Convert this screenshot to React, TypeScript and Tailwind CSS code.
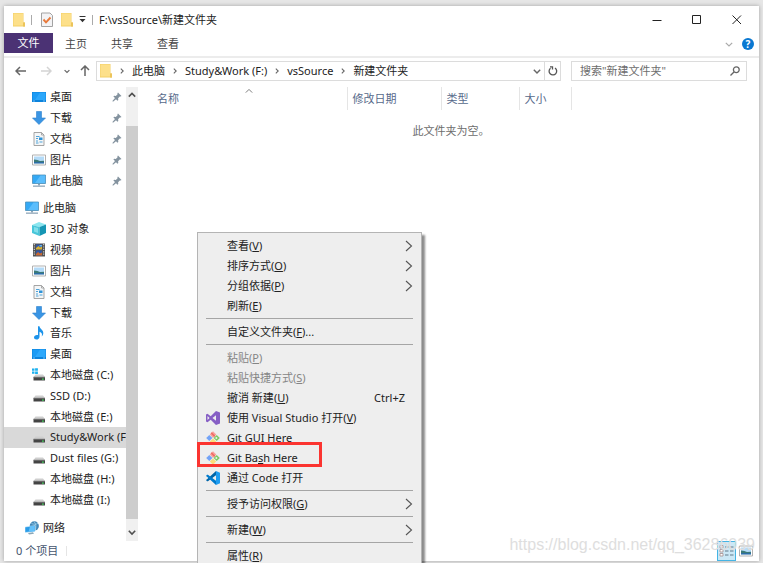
import type { ReactNode } from "react";

/* ---------- icons ---------- */

function FolderIcon() {
  return (
    <svg viewBox="0 0 12 15" className="h-[15px] w-3 shrink-0" aria-hidden="true">
      <path d="M0 1h10.500v9.500H12v4H0z" fill="#f3cf66" />
      <path d="M.5 1.500h9.500v12H.5z" fill="#fde08a" />
      <path d="M10 10.500h2v4h-2z" fill="#ecc45a" />
    </svg>
  );
}

function CheckPageIcon() {
  return (
    <svg viewBox="0 0 12 15" className="h-[15px] w-3 shrink-0" aria-hidden="true">
      <path d="M.5 1h8.500l2.500 2.500v11H.5z" fill="#f3f3f5" stroke="#a3a3a3" />
      <path d="M2.500 7.500 5 10.300l4.500-4.800" fill="none" stroke="#e8793a" strokeWidth="1.900" />
    </svg>
  );
}

function DesktopIcon() {
  return (
    <svg viewBox="0 0 14 12" className="h-3 w-[14px]" aria-hidden="true">
      <path d="M0 1h14v10H0z" fill="#0c83dc" />
      <path d="M.5 1.500h13v7.500H.5z" fill="#1b9bf5" />
      <path d="M8 1.500h5.500v7.500H3z" fill="#3bb0ff" opacity=".6" />
      <path d="M1 10h2M11 10h2" stroke="#8fd0ff" strokeWidth=".8" />
    </svg>
  );
}

function DownloadIcon() {
  return (
    <svg viewBox="0 0 14 14" className="h-[14px] w-[14px]" aria-hidden="true">
      <path d="M4.500.5h5V7h4L7 13.500.5 7h4z" fill="#3a95e4" stroke="#2c80cc" strokeWidth=".6" />
    </svg>
  );
}

function DocumentIcon() {
  return (
    <svg viewBox="0 0 14 14" className="h-[14px] w-[14px]" aria-hidden="true">
      <path d="M2 .5h7.500L12 3v10.500H2z" fill="#f4f6f7" stroke="#9b9b9b" strokeWidth=".9" />
      <path d="M9.500.5V3H12" fill="none" stroke="#9b9b9b" strokeWidth=".8" />
      <path d="M4 4.500h3.500M4 6.500h2M4 9h2M7.500 10h3M4 11h2.500" stroke="#4fa3d9" strokeWidth="1" />
      <path d="M7 5.500h3.500v2.500H7z" fill="#2d93d8" />
    </svg>
  );
}

function PictureIcon() {
  return (
    <svg viewBox="0 0 14 12" className="h-3 w-[14px]" aria-hidden="true">
      <path d="M.5 1h13v10H.5z" fill="#fff" stroke="#a8a8a8" strokeWidth=".9" />
      <path d="M2 2.500h10v7H2z" fill="#b4dbf8" />
      <path d="M2 5.500c3 0 4 1 6 1.500l4-.3v1.500H2z" fill="#3b7a78" />
      <path d="M2 8h10v1.500H2z" fill="#2e6da5" />
    </svg>
  );
}

function ComputerIcon() {
  return (
    <svg viewBox="0 0 14 14" className="h-[14px] w-[14px]" aria-hidden="true">
      <path d="M.5 1h13v8.500H.5z" fill="#34a9f5" stroke="#4c8fb8" strokeWidth=".8" />
      <path d="M8.500 1.400h4.600v7.700H3z" fill="#6bc6ff" opacity=".7" />
      <path d="M6 10h2v1.500H6z" fill="#8ba3b5" />
      <path d="M1 11.500h12v1.300H1z" fill="#8fa6b8" />
    </svg>
  );
}

function CubeIcon() {
  return (
    <svg viewBox="0 0 14 14" className="h-[14px] w-[14px]" aria-hidden="true">
      <path d="m0 3 7-3 7 2.500L7.500 5z" fill="#8be6ef" />
      <path d="m0 3 7.500 2v9L0 11z" fill="#48c6d9" />
      <path d="M7.500 5 14 2.500v8.500l-6.500 3z" fill="#1596b4" />
      <path d="m2 5 4 1v5l-4-1.500z" fill="#a6eff5" opacity=".6" />
    </svg>
  );
}

function VideoIcon() {
  return (
    <svg viewBox="0 0 14 14" className="h-[14px] w-[14px]" aria-hidden="true">
      <path d="M1 .5h12v13H1z" fill="#525252" />
      <path d="M2.300 1v12M11.700 1v12" stroke="#d7d7d7" strokeWidth="1.100" strokeDasharray="1.200 1.200" />
      <path d="M4 1.500h6v5H4zM4 7.500h6v5H4z" fill="#3157a5" />
      <path d="m4 5 2.500-2L8 4.500l2-1v3H4z" fill="#d8b130" />
      <path d="m4 11 2-2 2 1.500 2-1v3H4z" fill="#c9682e" />
      <path d="M7.500 2H10v1.500H7.500z" fill="#62b4ec" />
    </svg>
  );
}

function MusicIcon() {
  return (
    <svg viewBox="0 0 14 14" className="h-[14px] w-[14px]" aria-hidden="true">
      <path d="M6 .3h1.500C7.800 3 11.500 4 11.300 7c0 1.500-.6 2.600-1.600 3.500.8-2.500.1-4-2.200-4.800v5c0 1.800-1.500 2.900-3 2.900-1.400 0-2.500-.8-2.500-2 0-1.500 1.500-2.600 3.200-2.500H6z" fill="#1c93ea" />
    </svg>
  );
}

function DriveIcon({ system = false }: { system?: boolean }) {
  return (
    <svg viewBox="0 0 14 14" className="h-[14px] w-[14px]" aria-hidden="true">
      {system && <path d="M0 .5h2.500v2.300H0zM3.100.3h2.800v2.500H3.100zM0 3.400h2.500v2.300H0zM3.100 3.400h2.800v2.500H3.100z" fill="#1bb0ee" />}
      <path d="M3.500 6.500h7.500l2 2.500H1.500z" fill="#cfcfcf" />
      <path d="M1.500 9h11.500v3.500H1.500z" fill="#444" />
      <path d="M1.500 8.700h11.500v.8H1.500z" fill="#8d8d8d" />
      <path d="M10 10.500h1.800v1.200H10z" fill="#43d15c" />
    </svg>
  );
}

function NetworkIcon() {
  return (
    <svg viewBox="0 0 14 14" className="h-[14px] w-[14px]" aria-hidden="true">
      <circle cx="9.300" cy="4.900" r="4.600" fill="#4287b8" />
      <path d="M6.500 2.500c2 1 5 1 6.500-.2M9 .5c2 2 2.500 6 1 9" fill="none" stroke="#a5d3ea" strokeWidth=".8" />
      <path d="m0 6 10-1.500v6L0 11.500z" fill="#2a9ce8" stroke="#e7f4fb" strokeWidth=".5" />
      <path d="m5 5.300 4.600-.6v5.500l-6 .6z" fill="#63c0fa" />
      <path d="M3 12 8 11.300l1 1.500-5 .7z" fill="#8ba7b8" />
    </svg>
  );
}

function PinIcon() {
  return (
    <svg viewBox="0 0 10 10" className="h-[10px] w-[10px]" aria-hidden="true">
      <path d="M6 .5 9.500 4l-1 .5-.7-.1-1.700 1.900.2 1.700-.9.700L4 7.200 1 9.700.4 9.100 3 6 1.400 4.600l.7-.9 1.700.2 1.800-1.700L5.400 1.200z" fill="#84939f" />
    </svg>
  );
}

function VisualStudioIcon() {
  return (
    <svg viewBox="0 0 14 14" className="h-[14px] w-[14px]" aria-hidden="true">
      <path fillRule="evenodd" d="m10 0 4 1.600v10.800L10 14 4.700 8.800 1.500 11.300 0 10.500v-7l1.500-.8 3.200 2.500zM10 4.200 6.500 7 10 9.800zM1.500 5v4l2-2z" fill="#865fc5" />
    </svg>
  );
}

function CodeIcon() {
  return (
    <svg viewBox="0 0 14 14" className="h-[14px] w-[14px]" aria-hidden="true">
      <path d="M10 0 1 8.300l-1 .8 1 1.200.9-.1L10 4.200z" fill="#0065a9" />
      <path d="M10 14 1 5.700 0 4.900l1-1.200.9.1L10 9.800z" fill="#007acc" />
      <path d="m10 0 4 1.700v10.600L10 14z" fill="#1f9cf0" />
    </svg>
  );
}

function GitIcon() {
  return (
    <svg viewBox="0 0 14 14" className="h-[14px] w-[14px]" aria-hidden="true">
      <path d="M7 .3 10.300 3.600 7 6.900 3.700 3.600z" fill="#f8a09a" />
      <path d="m5.200 1.800 3.600 3.600" stroke="#ee6a64" strokeWidth="1.500" />
      <path d="M3.300 3.900 6.400 7 3.300 10.100.2 7z" fill="#73a3f7" />
      <path d="M10.700 3.900 13.800 7l-3.100 3.100L7.600 7z" fill="#7ccb62" />
      <circle cx="10.400" cy="7" r="1" fill="#eee" />
      <path d="M7 7.400 10.200 10.600 7 13.800l-3.200-3.200z" fill="#fbdc7c" />
    </svg>
  );
}

function Chevron({ className, d = "m1 3.500 4 4 4-4", width = 1.2 }: { className: string; d?: string; width?: number }) {
  return (
    <svg viewBox="0 0 10 10" className={className} fill="none" stroke="currentColor" strokeWidth={width} aria-hidden="true">
      <path d={d} />
    </svg>
  );
}

const RIGHT = "m3 1 4 4-4 4";
const UP = "m1 7 4-4 4 4";

/* ---------- navigation pane ---------- */

type NavEntry = { label: string; icon: ReactNode; pinned?: boolean; root?: boolean; selected?: boolean };

const quickAccess: NavEntry[] = [
  { label: "桌面", icon: <DesktopIcon />, pinned: true },
  { label: "下载", icon: <DownloadIcon />, pinned: true },
  { label: "文档", icon: <DocumentIcon />, pinned: true },
  { label: "图片", icon: <PictureIcon />, pinned: true },
  { label: "此电脑", icon: <ComputerIcon />, pinned: true },
];

const thisPc: NavEntry[] = [
  { label: "此电脑", icon: <ComputerIcon />, root: true },
  { label: "3D 对象", icon: <CubeIcon /> },
  { label: "视频", icon: <VideoIcon /> },
  { label: "图片", icon: <PictureIcon /> },
  { label: "文档", icon: <DocumentIcon /> },
  { label: "下载", icon: <DownloadIcon /> },
  { label: "音乐", icon: <MusicIcon /> },
  { label: "桌面", icon: <DesktopIcon /> },
  { label: "本地磁盘 (C:)", icon: <DriveIcon system /> },
  { label: "SSD (D:)", icon: <DriveIcon /> },
  { label: "本地磁盘 (E:)", icon: <DriveIcon /> },
  { label: "Study&Work (F:)", icon: <DriveIcon />, selected: true },
  { label: "Dust files (G:)", icon: <DriveIcon /> },
  { label: "本地磁盘 (H:)", icon: <DriveIcon /> },
  { label: "本地磁盘 (I:)", icon: <DriveIcon /> },
];

const network: NavEntry[] = [{ label: "网络", icon: <NetworkIcon />, root: true }];

function NavRow({ entry }: { entry: NavEntry }) {
  return (
    <li className="flex min-h-0 flex-1">
      <button
        className={`flex w-full items-center overflow-hidden text-left whitespace-nowrap ${entry.root ? "pl-[21px]" : "pl-7"} ${entry.selected ? "bg-[#d9d9d9]" : ""}`}
      >
        <span className="flex w-[14px] shrink-0 justify-center">{entry.icon}</span>
        <span className="ml-1 flex-1">{entry.label}</span>
        {entry.pinned && (
          <span className="mr-1">
            <PinIcon />
          </span>
        )}
      </button>
    </li>
  );
}

function NavigationPane() {
  return (
    <div className="flex w-[134px] shrink-0">
      <nav aria-label="导航窗格" className="flex w-[122px] flex-col gap-[7px] pb-[3px]">
        <ul className="flex flex-[5] flex-col">
          {quickAccess.map((e) => <NavRow key={e.label} entry={e} />)}
        </ul>
        <ul className="flex flex-[15] flex-col">
          {thisPc.map((e) => <NavRow key={e.label} entry={e} />)}
        </ul>
        <ul className="flex flex-1 flex-col">
          {network.map((e) => <NavRow key={e.label} entry={e} />)}
        </ul>
      </nav>
      <div className="flex w-3 flex-col items-center bg-[#f0f0f0] text-[#505050]">
        <button aria-label="向上滚动" className="flex h-[39px] pt-1">
          <Chevron className="h-2 w-2" d={UP} width={2} />
        </button>
        <div className="w-full flex-1 bg-[#cdcdcd]" />
        <button aria-label="向下滚动" className="flex h-[22px] items-center pt-1">
          <Chevron className="h-2 w-2" width={2} />
        </button>
      </div>
    </div>
  );
}

/* ---------- file list ---------- */

function FileList() {
  return (
    <main className="min-w-0 flex-1 pl-[5px]">
      <table className="w-full table-fixed border-collapse text-left">
        <thead className="text-[#56698a]">
          <tr className="h-[23px]">
            <th className="relative w-[204px] border-r border-[#e5e5e5] pl-[14px] font-normal">
              名称
              <Chevron className="absolute top-0 left-1/2 h-2 w-2 text-[#777]" d={UP} />
            </th>
            <th className="w-[94px] border-r border-[#e5e5e5] pl-[5px] font-normal">修改日期</th>
            <th className="w-[78px] border-r border-[#e5e5e5] pl-[5px] font-normal">类型</th>
            <th className="w-[52px] border-r border-[#e5e5e5] pl-[5px] font-normal">大小</th>
            <th aria-hidden="true" />
          </tr>
        </thead>
        <tbody>
          <tr>
            <td colSpan={5} className="h-[42px] text-center text-[#6d6d6d]">此文件夹为空。</td>
          </tr>
        </tbody>
      </table>
    </main>
  );
}

/* ---------- context menu ---------- */

type MenuEntry = { label: string; hotkey?: string; tail?: string; icon?: ReactNode; sub?: boolean; disabled?: boolean; shortcut?: string; marked?: boolean };

const menuGroups: MenuEntry[][] = [
  [
    { label: "查看", hotkey: "V", sub: true },
    { label: "排序方式", hotkey: "O", sub: true },
    { label: "分组依据", hotkey: "P", sub: true },
    { label: "刷新", hotkey: "E" },
  ],
  [{ label: "自定义文件夹", hotkey: "F", tail: "..." }],
  [
    { label: "粘贴", hotkey: "P", disabled: true },
    { label: "粘贴快捷方式", hotkey: "S", disabled: true },
    { label: "撤消 新建", hotkey: "U", shortcut: "Ctrl+Z" },
    { label: "使用 Visual Studio 打开", hotkey: "V", icon: <VisualStudioIcon /> },
    { label: "Git GUI Here", icon: <GitIcon /> },
    { label: "Git Bash Here", icon: <GitIcon />, marked: true },
    { label: "通过 Code 打开", icon: <CodeIcon /> },
  ],
  [{ label: "授予访问权限", hotkey: "G", sub: true }],
  [{ label: "新建", hotkey: "W", sub: true }],
  [{ label: "属性", hotkey: "R" }],
];

function MenuRow({ entry }: { entry: MenuEntry }) {
  return (
    <button
      role="menuitem"
      disabled={entry.disabled}
      className={`relative flex h-5 w-full items-center pr-2 pl-2 text-left ${entry.disabled ? "text-[#858585]" : "text-[#222]"}`}
    >
      <span className="w-[21px] shrink-0">{entry.icon}</span>
      <span className="flex-1">
        {entry.marked ? <>Git Ba<u>s</u>h Here</> : entry.label}
        {entry.hotkey && <>(<u>{entry.hotkey}</u>)</>}
        {entry.tail}
      </span>
      {entry.shortcut && <span className="mr-2">{entry.shortcut}</span>}
      {entry.sub && (
        <svg viewBox="0 0 8 12" className="h-3 w-2" fill="none" stroke="#555" strokeWidth="1.100" aria-hidden="true">
          <path d="m1 1 5.500 5L1 11" />
        </svg>
      )}
      {entry.marked && <span className="absolute -top-1.5 -left-px h-[25px] w-[125px] border-3 border-[#fb3430]" />}
    </button>
  );
}

function ContextMenu() {
  return (
    <div role="menu" className="absolute top-[232px] left-[197px] w-[225px] border border-[#b4b4b4] bg-[#eeeeee] py-[3px] shadow-[3px_3px_2px_rgba(0,0,0,0.45)]">
      {menuGroups.map((group, i) => (
        <div key={i}>
          {i > 0 && <hr className="mx-2 mt-0.5 mb-[3px] border-[#a5a5a5]" />}
          {group.map((e) => <MenuRow key={e.label} entry={e} />)}
        </div>
      ))}
    </div>
  );
}

/* ---------- window frame ---------- */

function TitleBar() {
  return (
    <header className="flex h-[27px] shrink-0 items-center pl-[9px]">
      <FolderIcon />
      <span className="ml-1.5 h-[10px] w-px bg-[#aaa]" />
      <button aria-label="属性" className="ml-[9px]"><CheckPageIcon /></button>
      <button aria-label="新建文件夹" className="ml-2"><FolderIcon /></button>
      <button aria-label="自定义快速访问工具栏" className="ml-[6px]">
        <svg viewBox="0 0 7 7" className="h-[7px] w-[7px]" aria-hidden="true">
          <path d="M.5 0h6v1h-6zM.5 3h6l-3 3.200z" fill="#333" />
        </svg>
      </button>
      <span className="ml-1.5 h-[10px] w-px bg-[#aaa]" />
      <h1 className="ml-1.5 flex-1">F:\vsSource\新建文件夹</h1>
      <div className="flex text-[#222]">
        <button aria-label="最小化" className="flex w-10 justify-center">
          <svg viewBox="0 0 10 10" className="h-[10px] w-[10px]" stroke="currentColor" aria-hidden="true"><path d="M.5 5.500h9" /></svg>
        </button>
        <button aria-label="最大化" className="flex w-10 justify-center">
          <svg viewBox="0 0 10 10" className="h-[10px] w-[10px]" fill="none" stroke="currentColor" aria-hidden="true"><path d="M.5.5h8v8h-8z" /></svg>
        </button>
        <button aria-label="关闭" className="flex w-[42px] justify-center pr-0.5">
          <svg viewBox="0 0 10 10" className="h-[10px] w-[10px]" stroke="currentColor" aria-hidden="true"><path d="m.5.5 8.500 8.500M9 .5.5 9" /></svg>
        </button>
      </div>
    </header>
  );
}

function RibbonTabs() {
  return (
    <div className="flex h-[25px] shrink-0 items-start border-b-2 border-[#ececec] text-[#444]">
      <button className="h-5 w-[49px] bg-[#4b3274] text-white">文件</button>
      <button className="h-[22px] w-[46px]">主页</button>
      <button className="h-[22px] w-[46px]">共享</button>
      <button className="h-[22px] w-[46px]">查看</button>
      <button aria-label="展开功能区" className="ml-auto flex h-[22px] items-center text-[#aaa]"><Chevron className="h-2 w-2" width={1.5} /></button>
      <button aria-label="帮助" className="mt-[5px] mr-[5px] ml-[9px] h-3 w-3 rounded-full bg-[#0a78d1] text-center text-[10px] leading-3 font-bold text-white">?</button>
    </div>
  );
}

const crumbs = ["此电脑", "Study&Work (F:)", "vsSource", "新建文件夹"];

function AddressRow() {
  return (
    <div className="flex h-[29px] shrink-0 items-center pr-3 pb-1 text-[#666]">
      <button aria-label="后退" className="ml-[11px]">
        <svg viewBox="0 0 11 10" className="h-[10px] w-[11px]" fill="none" stroke="#666" strokeWidth="1.500" aria-hidden="true"><path d="M11 5H1M5 1 1 5l4 4" /></svg>
      </button>
      <button aria-label="前进" className="ml-[15px]">
        <svg viewBox="0 0 11 10" className="h-[10px] w-[11px]" fill="none" stroke="#d4d4d4" strokeWidth="1.500" aria-hidden="true"><path d="M0 5h10M6 1l4 4-4 4" /></svg>
      </button>
      <button aria-label="最近浏览的位置" className="ml-[12px]"><Chevron className="h-1.5 w-1.5" width={2} /></button>
      <button aria-label="上移" className="ml-[10px]">
        <svg viewBox="0 0 10 11" className="h-[11px] w-[10px]" fill="none" stroke="#666" strokeWidth="1.500" aria-hidden="true"><path d="M5 11V1M1 5l4-4 4 4" /></svg>
      </button>
      <div className="ml-1.5 flex h-5 min-w-0 flex-1 items-center border border-[#dcdcdc] pl-[3px]">
        <FolderIcon />
        {crumbs.map((c) => (
          <span key={c} className="flex items-center">
            <Chevron className="ml-[7px] h-1.5 w-1.5" d={RIGHT} width={1.8} />
            <button className="ml-[7px] whitespace-nowrap text-[#222]">{c}</button>
          </span>
        ))}
        <button aria-label="以前的位置" className="ml-auto"><Chevron className="h-2 w-2" width={1.8} /></button>
        <button aria-label="刷新" className="ml-[3px] flex h-full w-4 items-center justify-center border-l border-[#dcdcdc]">
          <svg viewBox="0 0 10 10" className="h-[10px] w-[10px]" fill="none" stroke="#555" strokeWidth="1.300" aria-hidden="true"><path d="M7 2a3.800 3.800 0 1 1-4.500.2M2 .8h2.500v2.700" /></svg>
        </button>
      </div>
      <label className="ml-[10px] flex h-5 w-[176px] items-center border border-[#dcdcdc] pr-1.5 pl-2">
        <input aria-label="搜索" placeholder={'搜索"新建文件夹"'} className="min-w-0 flex-1 outline-none placeholder:text-[#6d6d6d]" />
        <svg viewBox="0 0 10 10" className="h-[10px] w-[10px]" fill="none" stroke="#666" strokeWidth="1.300" aria-hidden="true"><circle cx="6.300" cy="3.700" r="2.900" /><path d="M4.200 5.800.5 9.500" /></svg>
      </label>
    </div>
  );
}

function StatusBar() {
  return (
    <footer className="flex h-5 shrink-0 items-center pr-1.5 pl-3 text-[#44546e]">
      <span>0 个项目</span>
      <span className="ml-2 h-[10px] w-px bg-[#e5e5e5]" />
      <button aria-label="详细信息" className="ml-auto flex h-5 w-[19px] items-center justify-center border border-[#45b4e4] bg-[#cbe8f6]">
        <svg viewBox="0 0 15 12" className="h-3 w-[15px]" fill="none" aria-hidden="true">
          <path d="M1 .5h3v2.500H1zM1 4.500h3V7H1zM1 8.500h3V11H1z" fill="#fff" stroke="#a58d8d" strokeWidth=".8" />
          <path d="M6 2h3.500M11 2h3.500M6 6h3.500M11 6h3.500M6 10h3.500M11 10h3.500" stroke="#60798a" />
        </svg>
      </button>
      <button aria-label="大缩略图" className="ml-[3px]"><PictureIcon /></button>
    </footer>
  );
}

export default function App() {
  return (
    <div className="relative flex h-screen flex-col overflow-hidden bg-[#e6e6e6] px-1 pt-1.5 pb-0.5 font-['Noto_Sans','Noto_Sans_CJK_SC',sans-serif] text-[11px] leading-4 text-[#222]">
      <div className="flex min-h-0 flex-1 flex-col bg-white shadow-[0_0_4px_rgba(0,0,0,0.3)]">
        <TitleBar />
        <RibbonTabs />
        <AddressRow />
        <div className="flex min-h-0 flex-1">
          <NavigationPane />
          <FileList />
        </div>
        <StatusBar />
      </div>
      <ContextMenu />
      <p className="pointer-events-none absolute right-2 bottom-2 font-['Liberation_Sans',sans-serif] text-[16px] leading-5 text-[#dedede]">
        https://blog.csdn.net/qq_36286039
      </p>
    </div>
  );
}
